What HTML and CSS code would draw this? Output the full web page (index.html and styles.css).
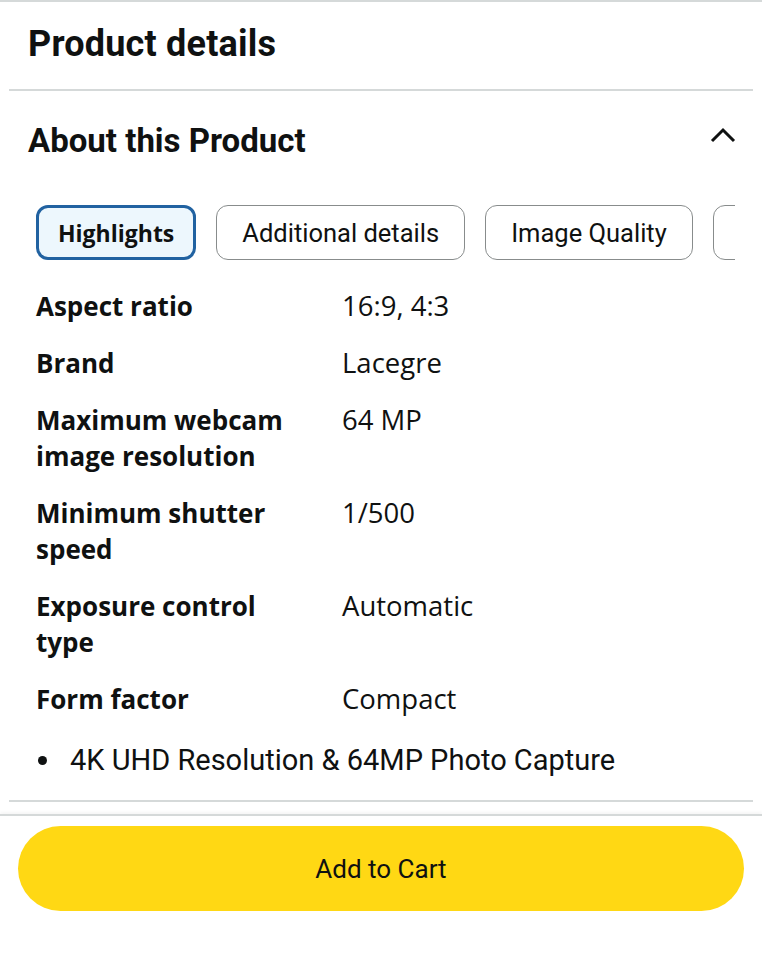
FILE: index.html
```html
<!DOCTYPE html>
<html>
<head>
<meta charset="utf-8">
<link rel="stylesheet" href="styles.css">
</head>
<body>
<div class="page">
  <h1 class="title">Product details</h1>
  <hr class="divider">
  <div class="section-head">
    <h2 class="subtitle">About this Product</h2>
    <svg class="chevron" width="26" height="18" viewBox="0 0 26 18"><path d="M2 15 L13 4 L24 15" fill="none" stroke="#0f1111" stroke-width="3"/></svg>
  </div>
  <div class="tabs">
    <div class="tab active">Highlights</div>
    <div class="tab">Additional details</div>
    <div class="tab">Image Quality</div>
    <div class="tab stub"></div>
  </div>
  <div class="specs">
    <div class="row"><div class="label">Aspect ratio</div><div class="value">16:9, 4:3</div></div>
    <div class="row"><div class="label">Brand</div><div class="value">Lacegre</div></div>
    <div class="row"><div class="label">Maximum webcam image resolution</div><div class="value">64 MP</div></div>
    <div class="row"><div class="label">Minimum shutter speed</div><div class="value">1/500</div></div>
    <div class="row"><div class="label">Exposure control type</div><div class="value">Automatic</div></div>
    <div class="row"><div class="label">Form factor</div><div class="value">Compact</div></div>
  </div>
  <ul class="bullets">
    <li>4K UHD Resolution &amp; 64MP Photo Capture</li>
  </ul>
  <hr class="divider bottom">
</div>
<div class="footer">
  <button class="cart">Add to Cart</button>
</div>
</body>
</html>
```
FILE: styles.css
```css
html, body {
  margin: 0;
  padding: 0;
  background: #fff;
  color: #0f1111;
}
body {
  width: 762px;
  height: 960px;
  overflow: hidden;
  border-top: 2px solid #d5d9d9;
  box-sizing: border-box;
}
.title {
  font-family: Roboto, "Liberation Sans", sans-serif;
  font-weight: 700;
  font-size: 36px;
  letter-spacing: 0.2px;
  line-height: 40px;
  margin: 0;
  padding: 22px 28px 25px;
}
.divider {
  border: 0;
  height: 2px;
  background: #d5d9d9;
  margin: 0 9px 0 9px;
}
.section-head {
  display: flex;
  justify-content: space-between;
  align-items: center;
  padding: 30px 26px 0 28px;
  height: 40px;
}
.subtitle {
  font-family: Roboto, "Liberation Sans", sans-serif;
  font-weight: 700;
  font-size: 33px;
  line-height: 40px;
  margin: 0;
}
.chevron {
  display: block;
  margin-top: -12px;
}
.tabs {
  display: flex;
  gap: 20px;
  margin: 44px 27px 0 36px;
  overflow: hidden;
}
.tab {
  flex: none;
  height: 55px;
  box-sizing: border-box;
  border: 1px solid #888c8c;
  border-radius: 12px;
  padding: 0 25px;
  display: flex;
  align-items: center;
  font-family: Roboto, "Liberation Sans", sans-serif;
  font-size: 25.5px;
}
.tab.active {
  border: 3px solid #2162a1;
  background: #edf7fd;
  font-family: "Open Sans", "Noto Sans", sans-serif;
  font-weight: 700;
  font-size: 23px;
  padding: 0 19px;
}
.tab.stub {
  width: 80px;
}
.specs {
  padding: 28px 0 0 36px;
  font-family: "Open Sans", "Noto Sans", sans-serif;
  font-size: 26px;
  line-height: 36px;
}
.row {
  display: grid;
  grid-template-columns: 306px 1fr;
  margin-bottom: 21px;
}
.label {
  font-weight: 700;
  padding-right: 40px;
}
.value {
  font-size: 27.5px;
}
.bullets {
  list-style: none;
  margin: 0;
  padding: 4px 0 0 36px;
  font-family: Roboto, "Liberation Sans", sans-serif;
  font-size: 29px;
  line-height: 36px;
}
.bullets li {
  display: flex;
  align-items: center;
}
.bullets li::before {
  content: "";
  width: 9px;
  height: 9px;
  border-radius: 50%;
  background: #0f1111;
  margin: 0 23px 0 2px;
  flex: none;
}
.divider.bottom {
  margin-top: 22px;
}
.footer {
  margin-top: 12px;
  border-top: 2px solid #d5d9d9;
  box-shadow: 0 -2px 3px rgba(0,0,0,0.04);
  padding: 10px 18px 0 18px;
}
.cart {
  display: block;
  width: 726px;
  height: 85px;
  border: 0;
  border-radius: 43px;
  background: #ffd814;
  color: #0f1111;
  font-family: Roboto, "Liberation Sans", sans-serif;
  font-size: 26px;
}
```
